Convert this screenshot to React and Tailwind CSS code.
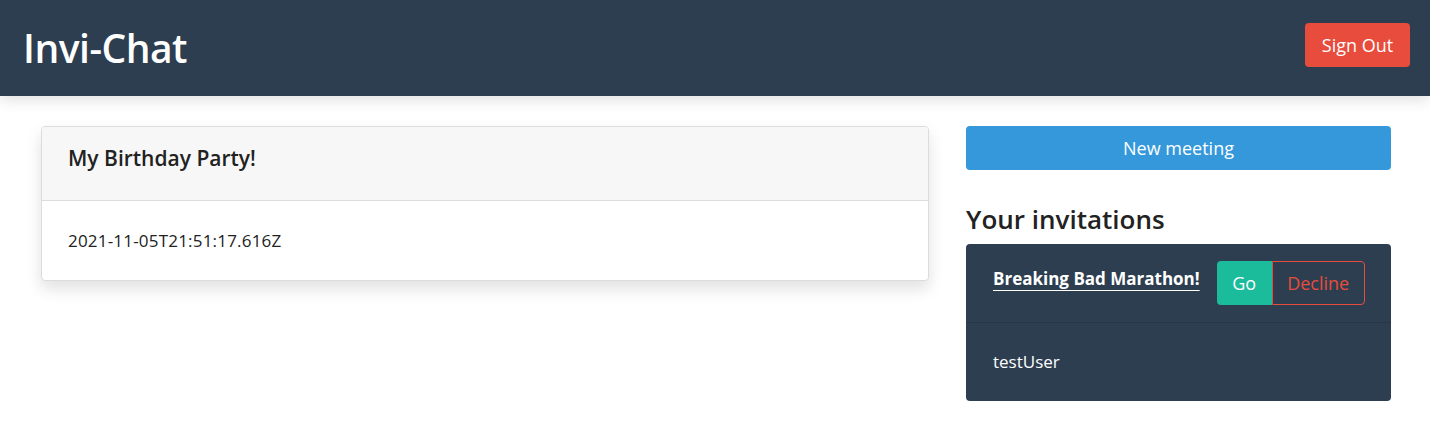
import React from "react";

const font = { fontFamily: '"Open Sans", "Noto Sans", sans-serif' };

const Navbar = () => (
  <div className="relative z-10 flex h-[96px] items-center justify-between bg-[#2c3e50] pl-[23px] pr-[20px] shadow-[0_4px_14px_rgba(0,0,0,0.12)]">
    <h1 className="text-[39px] font-semibold tracking-[-0.5px] text-white">Invi-Chat</h1>
    <button className="mb-[6px] h-[44px] w-[105px] rounded-[4px] bg-[#e74c3c] text-[18px] text-white">
      Sign Out
    </button>
  </div>
);

const MeetingCard = ({ title, date }) => (
  <div className="overflow-hidden rounded-[4px] border border-[#dcdcdc] bg-white shadow-[0_8px_16px_rgba(0,0,0,0.12)]">
    <div className="h-[74px] border-b border-[#dcdcdc] bg-[#f7f7f7] px-[26px] pt-[16px]">
      <h2 className="text-[21px] font-semibold leading-[30px] text-[#222]">{title}</h2>
    </div>
    <div className="flex h-[79px] items-center px-[26px]">
      <p className="text-[17px] tracking-[0.2px] text-[#222]">{date}</p>
    </div>
  </div>
);

const InvitationCard = ({ title, owner }) => (
  <div className="rounded-[4px] bg-[#2c3e50]">
    <div className="flex h-[79px] items-center border-b border-[#263645] pl-[27px] pr-[20px]">
      <a className="mb-[9px] shrink-0 whitespace-nowrap text-[17px] font-bold text-white underline decoration-1 underline-offset-[5px]">
        {title}
      </a>
      <div className="ml-[17px] flex shrink-0">
        <button className="h-[44px] w-[55px] rounded-l-[4px] bg-[#1abc9c] text-[18px] text-white">Go</button>
        <button className="h-[44px] w-[93px] rounded-r-[4px] border border-[#e74c3c] text-[18px] text-[#e74c3c]">
          Decline
        </button>
      </div>
    </div>
    <div className="flex h-[78px] items-center px-[27px]">
      <p className="text-[17px] text-white">{owner}</p>
    </div>
  </div>
);

export default function App() {
  return (
    <div className="min-h-[434px] bg-white" style={font}>
      <Navbar />
      <div className="flex gap-[37px] pl-[41px] pr-[39px] pt-[30px]">
        <div className="w-[888px]">
          <MeetingCard title="My Birthday Party!" date="2021-11-05T21:51:17.616Z" />
        </div>
        <div className="flex-1">
          <button className="h-[44px] w-full rounded-[4px] bg-[#3498db] text-[18px] text-white">
            New meeting
          </button>
          <h2 className="mt-[32px] mb-[8px] text-[26px] font-semibold leading-[34px] text-[#222]">
            Your invitations
          </h2>
          <InvitationCard title="Breaking Bad Marathon!" owner="testUser" />
        </div>
      </div>
    </div>
  );
}
